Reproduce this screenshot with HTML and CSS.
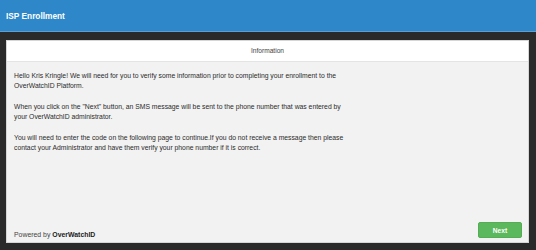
FILE: index.html
```html
<!DOCTYPE html>
<html lang="en">
<head>
  <meta charset="UTF-8" />
  <title>ISP Enrollment</title>
  <link rel="stylesheet" href="styles.css">
</head>
<body>

  <header class="topbar">
    <h1>ISP Enrollment</h1>
  </header>

  <section class="panel">
    <div class="panel-head">Information</div>
    <div class="panel-body">
      <p>Hello Kris Kringle! We will need for you to verify some information prior to completing your enrollment to the OverWatchID Platform.</p>
      <p>When you click on the "Next" button, an SMS message will be sent to the phone number that was entered by your OverWatchID administrator.</p>
      <p>You will need to enter the code on the following page to continue.If you do not receive a message then please contact your Administrator and have them verify your phone number if it is correct.</p>
    </div>
    <div class="panel-foot">
      <span class="powered">Powered by <b>OverWatchID</b></span>
      <button type="button" class="btn-next">Next</button>
    </div>
  </section>

</body>
</html>
```

FILE: styles.css
```css
/* Base */
body {
  margin: 0;
  font-family: 'Liberation Sans', Arial, sans-serif;
  background: #2a2a2a;
  color: #333;
  height: 250px;
  overflow: hidden;
}

/* Top bar */
.topbar {
  background: #2d87c8;
  height: 31px;
  border-bottom: 1px solid #5d9fd0;
  display: flex;
  align-items: center;
  padding: 0 6px;
}

.topbar h1 {
  margin: 0;
  font-size: 8.3px;
  font-weight: 700;
  color: #fff;
}

/* Panel */
.panel {
  margin: 8px 7px 0 6px;
  height: 203px;
  background: #f2f2f2;
  border: 1px solid #d6d6d6;
  box-sizing: border-box;
  display: flex;
  flex-direction: column;
}

.panel-head {
  background: #fff;
  height: 20px;
  border-bottom: 1px solid #e4e4e4;
  text-align: center;
  font-size: 6.6px;
  line-height: 20px;
  color: #444;
}

.panel-body {
  flex: 1;
  padding: 9px 7px 0;
  font-size: 6.8px;
  line-height: 10.3px;
  color: #2b2b2b;
}

.panel-body p {
  margin: 0 0 10.5px;
  max-width: 336px;
}

.panel-foot {
  display: flex;
  justify-content: space-between;
  align-items: flex-end;
  padding: 0 6px 4px 7px;
}

.powered {
  font-size: 6.9px;
  color: #444;
  line-height: 8px;
  margin-bottom: -1px;
}

.powered b {
  color: #222;
}

.btn-next {
  background: #5cb85c;
  border: 1px solid #54ad54;
  color: #fff;
  font-family: inherit;
  font-size: 6.6px;
  font-weight: 700;
  width: 44px;
  height: 16px;
  border-radius: 2px;
  padding: 0;
  cursor: pointer;
}
```
